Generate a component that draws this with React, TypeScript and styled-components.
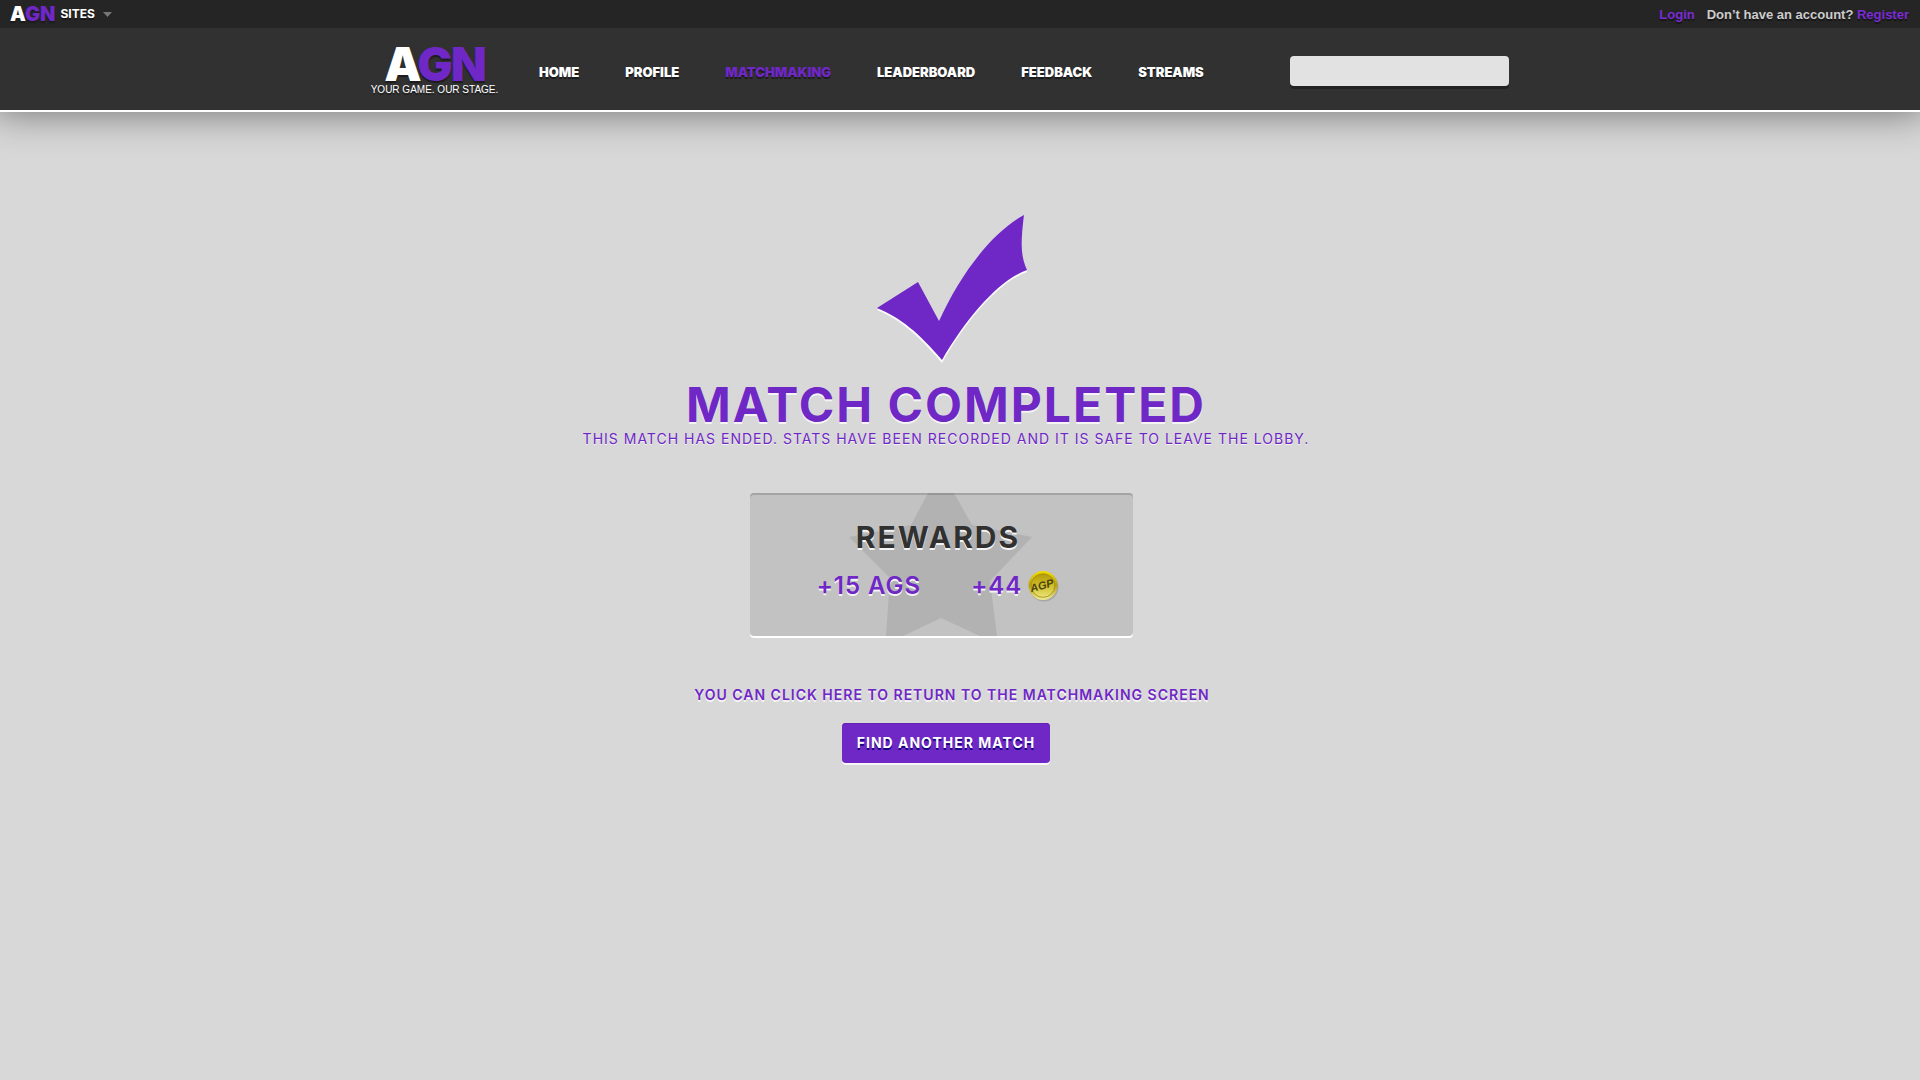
import React from 'react';
import styled, { createGlobalStyle } from 'styled-components';

const purple = '#6f27c6';
const display = `Inter, "Open Sans", sans-serif`;
const body = `"Liberation Sans", Arial, sans-serif`;

const GlobalStyle = createGlobalStyle`
  *, *::before, *::after { box-sizing: border-box; }
  body {
    margin: 0;
    background: #d8d8d8;
    color: #313131;
    font-family: ${display};
  }
  a { text-decoration: none; }
  h1, h2, p { margin: 0; }
`;

const TopBar = styled.div`
  position: relative;
  display: flex;
  align-items: center;
  justify-content: space-between;
  height: 28px;
  padding: 0 11px 0 10px;
  background: #252525;
`;

const SitesButton = styled.button`
  display: flex;
  align-items: center;
  gap: 5px;
  padding: 0;
  border: 0;
  background: none;
  color: #fff;
  font: 700 12px/20px ${display};
  text-shadow: 0 2px 0 #161616;
  cursor: pointer;
`;

const Wordmark = styled.span<{ $large?: boolean }>`
  color: #fff;
  font-family: ${display};
  font-size: ${(p) => (p.$large ? 47 : 20)}px;
  font-weight: 900;
  line-height: ${(p) => (p.$large ? 37 : 20)}px;
  letter-spacing: ${(p) => (p.$large ? -2 : 0)}px;
  text-shadow: 0 2px 1px #1c1c1c;

  b {
    color: ${purple};
    font-weight: 900;
  }
`;

const Caret = styled.svg`
  display: block;
  margin-left: 3px;
`;

const Account = styled.div`
  display: flex;
  gap: 12px;
  padding-top: 2px;
  color: #ccc;
  font: 700 13px/20px ${body};
  text-shadow: 0 2px 0 #161616;

  a { color: #7a2bd6; }
`;

const Header = styled.header`
  background: #313131;
  border-bottom: 2px solid #fff;
  box-shadow: 0 -6px 40px 6px rgba(0, 0, 0, 0.5);
`;

const HeaderInner = styled.div`
  display: flex;
  align-items: center;
  max-width: 1180px;
  height: 82px;
  margin: 0 auto;
`;

const Brand = styled.a`
  display: flex;
  flex-direction: column;
  align-items: center;
  width: 129px;
  padding-top: 4px;
  color: #fff;
`;

const Tagline = styled.span`
  font: 400 10px/16px ${body};
  white-space: nowrap;
  text-shadow: 0 2px 0 #1c1c1c;
`;

const Nav = styled.nav`
  display: flex;
  gap: 46px;
  margin: 6px 0 0 40px;
`;

const NavLink = styled.a<{ $active?: boolean }>`
  color: ${(p) => (p.$active ? purple : '#fff')};
  font: 900 13px/16px ${display};
  text-shadow: 0 2px 0 #1c1c1c;
`;

const Search = styled.input`
  width: 219px;
  height: 30px;
  margin: 4px 41px 0 auto;
  padding: 0 10px;
  border: 0;
  border-radius: 4px;
  background: #e2e2e2;
  box-shadow: 0 3px 0 #202224;
  font: 400 14px ${body};
`;

const Main = styled.main`
  display: flex;
  flex-direction: column;
  align-items: center;
  padding: 102px 28px 40px 0;
  color: ${purple};
  text-align: center;
  text-shadow: 0 2px 0 #f4f4f4;
`;

const Check = styled.svg`
  display: block;
`;

const Title = styled.h1`
  margin-top: 18px;
  font-size: 48px;
  font-weight: 700;
  line-height: 48px;
  letter-spacing: 2px;
`;

const Subtitle = styled.p`
  font-size: 14px;
  font-weight: 400;
  line-height: 20px;
  letter-spacing: 1px;
  text-shadow: 0 1px 0 #f4f4f4;
`;

const Rewards = styled.section`
  display: flex;
  flex-direction: column;
  align-items: center;
  width: 383px;
  height: 143px;
  margin: 44px 10px 0 0;
  padding: 24px 6px 0 0;
  border-radius: 4px;
  background: #c2c2c2;
  box-shadow: inset 0 2px 0 #a4a4a4, 0 2px 0 #fff;
  isolation: isolate;
  position: relative;
`;

const Star = styled.svg`
  position: absolute;
  inset: 0;
  z-index: -1;
`;

const RewardsTitle = styled.h2`
  color: #313131;
  font-size: 30px;
  font-weight: 700;
  line-height: 40px;
  letter-spacing: 2px;
`;

const RewardList = styled.div`
  display: flex;
  gap: 50px;
  margin-top: 9px;
  font-size: 24px;
  font-weight: 600;
  line-height: 40px;
  letter-spacing: 1px;
`;

const Reward = styled.span`
  display: flex;
  align-items: center;
  gap: 6px;
`;

const Prompt = styled.p`
  margin: 49px 0 0 12px;
  font-size: 14px;
  font-weight: 600;
  line-height: 20px;
  letter-spacing: 1px;
`;

const FindButton = styled.button`
  height: 40px;
  margin-top: 18px;
  padding: 0 15px;
  border: 0;
  border-radius: 4px;
  background: ${purple};
  box-shadow: inset 0 1px 0 #6420b4, 0 2px 0 #f6f6f6;
  color: #fff;
  font: 700 14px/20px ${display};
  letter-spacing: 1px;
  text-shadow: 0 2px 0 #14007c;
  cursor: pointer;
`;

const links = ['HOME', 'PROFILE', 'MATCHMAKING', 'LEADERBOARD', 'FEEDBACK', 'STREAMS'];

const CoinText = styled.text`
  fill: #4a4310;
  font: italic 700 11px "Liberation Sans", Arial, sans-serif;
  letter-spacing: 0;
  text-shadow: none;
`;

const Coin = () => (
  <svg width="31" height="32" viewBox="0 0 31 32" role="img" aria-label="AGP">
    <defs>
      <linearGradient id="rim" x1="0" y1="0" x2="0" y2="1">
        <stop offset="0" stopColor="#f5de00" />
        <stop offset="0.5" stopColor="#b59f10" />
        <stop offset="1" stopColor="#f0eb96" />
      </linearGradient>
      <linearGradient id="face" x1="0" y1="0" x2="0" y2="1">
        <stop offset="0" stopColor="#b39b08" />
        <stop offset="0.5" stopColor="#cfbd28" />
        <stop offset="1" stopColor="#ebe478" />
      </linearGradient>
    </defs>
    <circle cx="16" cy="17" r="14.5" fill="#8c8c8c" opacity="0.5" />
    <circle cx="15" cy="15.5" r="14.5" fill="url(#rim)" />
    <circle cx="15" cy="15.5" r="11.8" fill="url(#face)" stroke="#a08d10" strokeWidth="0.8" />
    <CoinText x="14" y="19" textAnchor="middle" transform="rotate(-15 15 16)">AGP</CoinText>
  </svg>
);

export default function App() {
  return (
    <>
      <GlobalStyle />
      <TopBar>
        <SitesButton type="button">
          <Wordmark>A<b>GN</b></Wordmark>
          SITES
          <Caret width="9" height="5" viewBox="0 0 9 5">
            <path d="M0 0h9L4.500 5z" fill="#777" />
          </Caret>
        </SitesButton>
        <Account>
          <a href="#login">Login</a>
          <span>Don’t have an account? <a href="#register">Register</a></span>
        </Account>
      </TopBar>
      <Header>
        <HeaderInner>
          <Brand href="#home">
            <Wordmark $large>A<b>GN</b></Wordmark>
            <Tagline>YOUR GAME. OUR STAGE.</Tagline>
          </Brand>
          <Nav>
            {links.map((label) => (
              <NavLink key={label} href={`#${label.toLowerCase()}`} $active={label === 'MATCHMAKING'}>
                {label}
              </NavLink>
            ))}
          </Nav>
          <Search type="search" aria-label="Search" />
        </HeaderInner>
      </Header>
      <Main>
        <Check width="164" height="149" viewBox="0 0 164 149" aria-hidden="true">
          <g transform="translate(12 1)">
            <path d="M1 94L42 68L62 107C83 61 114 18 148 0C145 26 144 40 151 56C123 66 91 103 66 147C43 120 25 104 1 94Z" fill="#fbfbfb" transform="translate(0 1)" />
            <path d="M1 93L42 67L63 106C84 60 115 18 148 0C145 26 144 40 151 55C123 65 91 102 66 145C43 118 25 103 1 93Z" fill={purple} />
          </g>
        </Check>
        <Title>MATCH COMPLETED</Title>
        <Subtitle>THIS MATCH HAS ENDED. STATS HAVE BEEN RECORDED AND IT IS SAFE TO LEAVE THE LOBBY.</Subtitle>
        <Rewards>
          <Star width="383" height="143" viewBox="0 0 383 143" aria-hidden="true">
            <path d="M178 0H204L222 32L282 44L240 88L247 143H230L191 125L153 143H136L140 85L99 44L161 32Z" fill="#b2b2b2" />
            <path d="M178 0H204L205 2H177Z" fill="#979797" />
          </Star>
          <RewardsTitle>REWARDS</RewardsTitle>
          <RewardList>
            <Reward>+15 AGS</Reward>
            <Reward>+44 <Coin /></Reward>
          </RewardList>
        </Rewards>
        <Prompt>YOU CAN CLICK HERE TO RETURN TO THE MATCHMAKING SCREEN</Prompt>
        <FindButton type="button">FIND ANOTHER MATCH</FindButton>
      </Main>
    </>
  );
}
